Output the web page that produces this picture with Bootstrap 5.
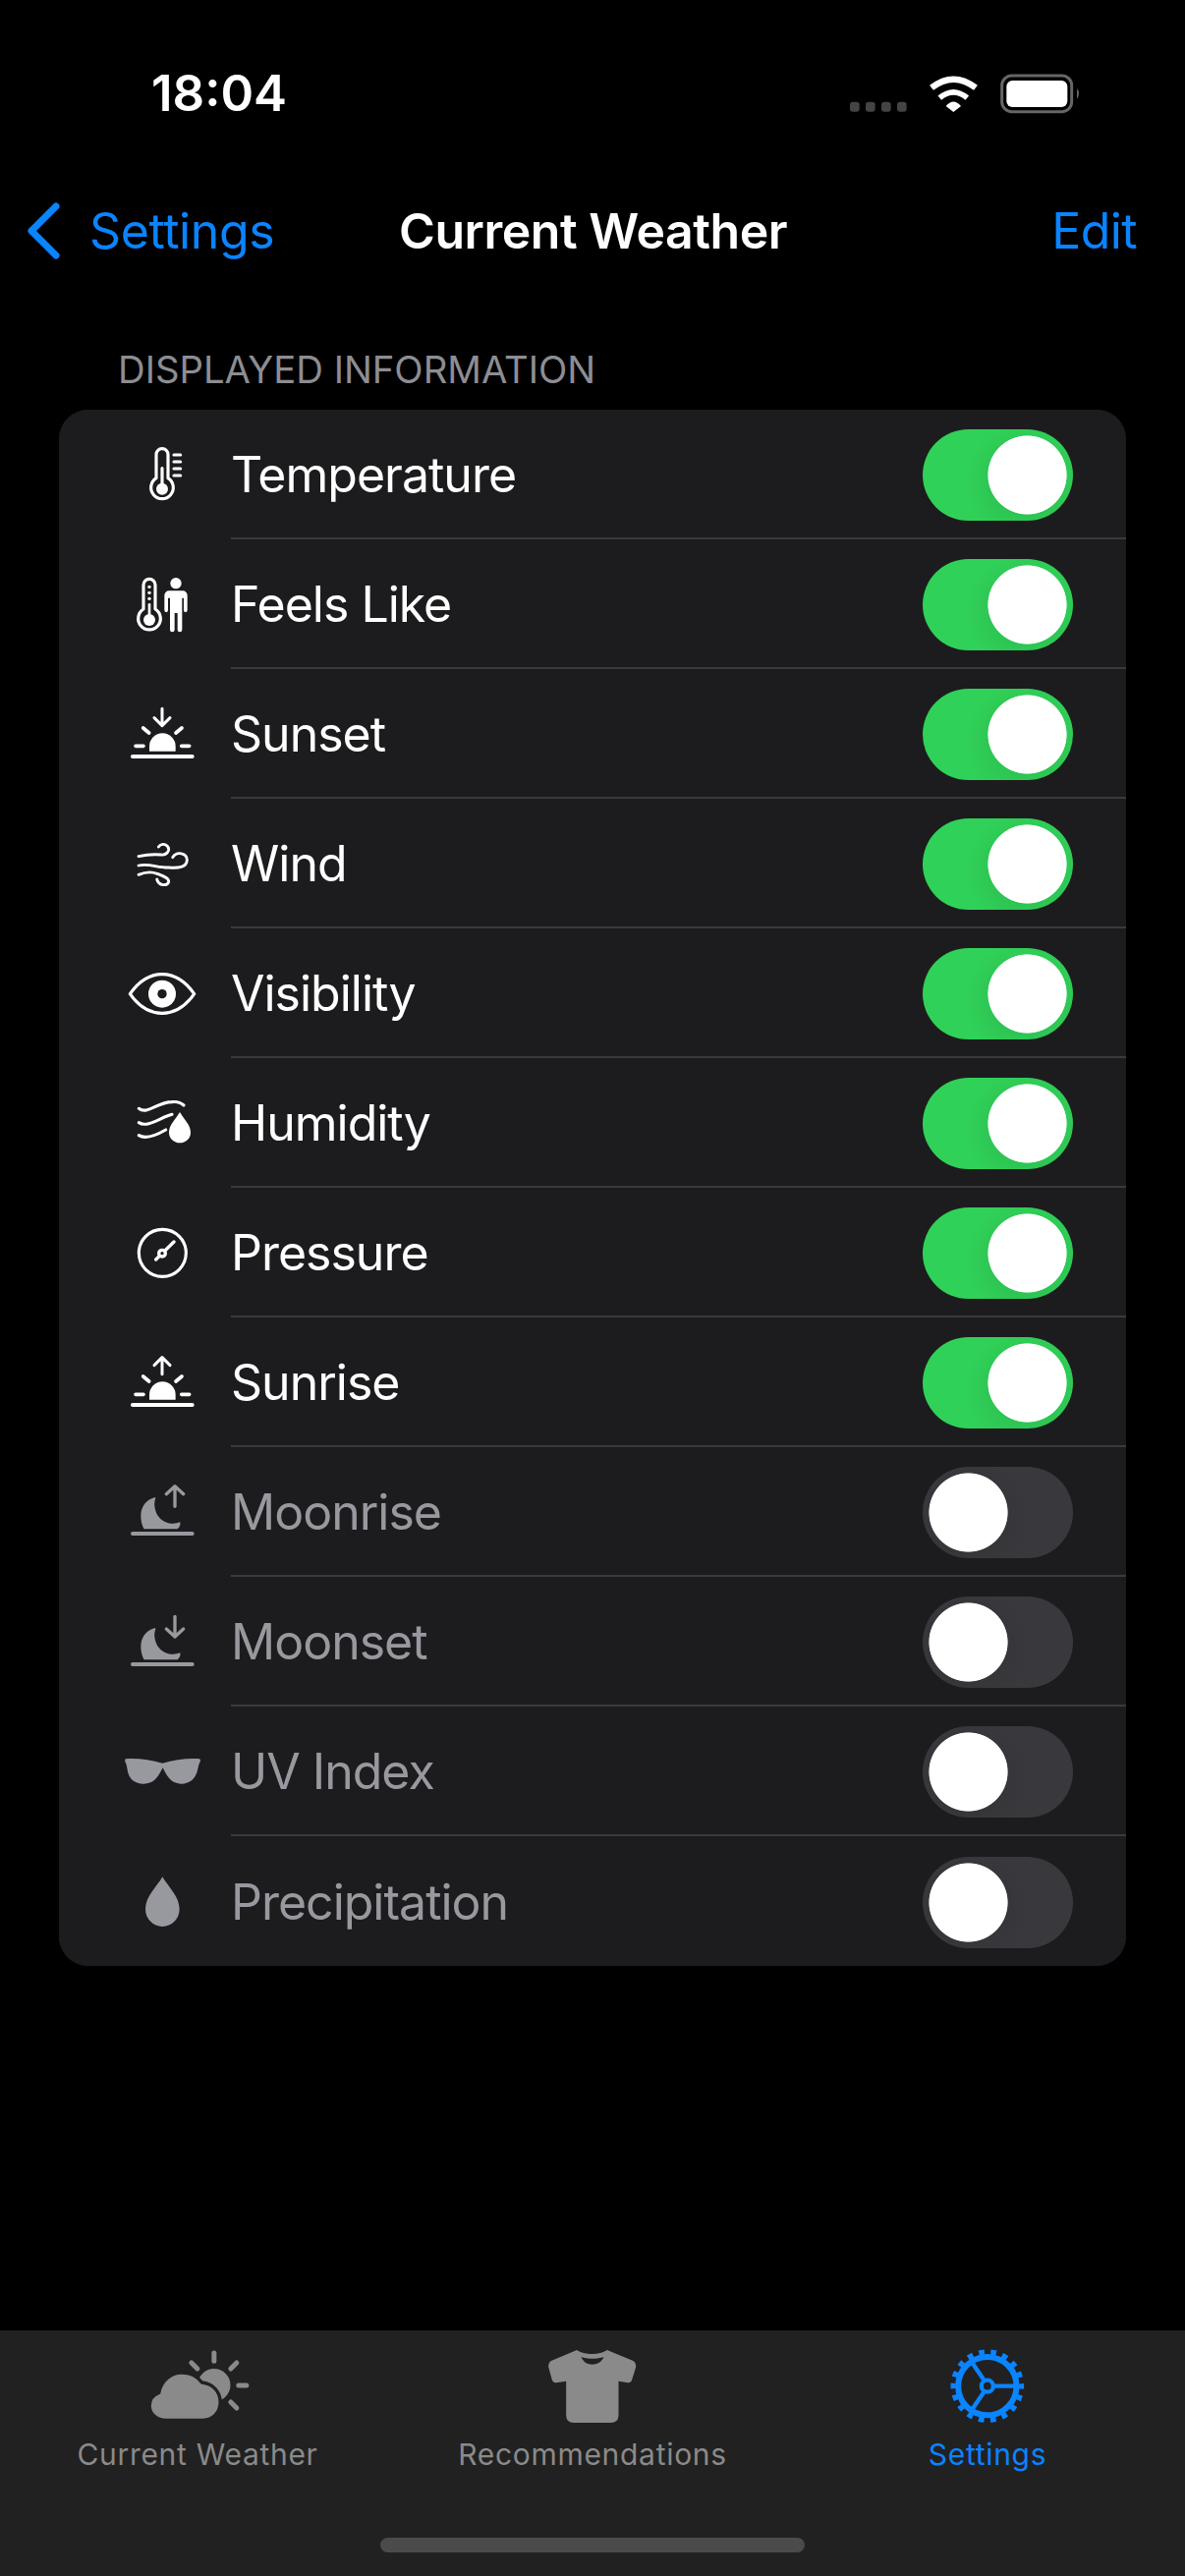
<!DOCTYPE html>
<html lang="en">
<head>
  <meta charset="UTF-8" />
  <meta name="viewport" content="width=device-width, initial-scale=1" />
  <title>Current Weather</title>
  <link href="https://cdn.jsdelivr.net/npm/bootstrap@5.3.2/dist/css/bootstrap.min.css" rel="stylesheet" />
  <style>
    html, body { background: #000; }
    body {
      width: 1206px;
      height: 2622px;
      overflow: hidden;
      font-family: Inter, "Liberation Sans", sans-serif;
      color: #fff;
    }
    .ios-blue { color: #0a84ff; }
    .status-line { height: 50px; margin-top: 70px; padding-left: 154px; padding-right: 101px; }
    .status-time { font-size: 51px; font-weight: 600; line-height: 50px; }
    .nav-line { height: 60px; margin-top: 85px; font-size: 50px; line-height: 60px; }
    .nav-back { width: 406px; flex: none; padding-left: 27px; gap: 30px; letter-spacing: -0.4px; }
    .nav-edit { flex: 1 1 0; padding-right: 49px; letter-spacing: -0.6px; }
    .nav-title { font-weight: 600; letter-spacing: -0.45px; }
    .section-label {
      height: 40px;
      margin: 91px 0 21px 120px;
      font-size: 38.300px;
      line-height: 40px;
      color: #8d8d93;
    }
    .settings-list { margin: 0 60px; border-radius: 30px; background: #1c1c1e; --bs-list-group-bg: #1c1c1e; --bs-list-group-border-width: 0; }
    .settings-item { height: 132px; padding: 0; background: #1c1c1e; color: #fff; }
    .settings-item.is-off { color: #98989f; }
    .item-icon { width: 80px; height: 80px; margin-left: 65px; margin-right: 30px; flex: none; }
    .item-body {
      height: 132px;
      padding-top: 2px;
      padding-right: 54px;
      border-bottom: 2px solid #3a3a3c;
      font-size: 50px;
      letter-spacing: -1px;
    }
    .item-body > span { margin-top: 1px; }
    .settings-item:last-child .item-body { border-bottom: 0; }
    .form-switch.ios-switch { margin: 0; padding: 0; min-height: 0; line-height: 0; }
    .form-switch .ios-toggle {
      width: 153px;
      height: 93px;
      margin: 0;
      border: 0;
      border-radius: 47px;
      background-color: #39393d;
      background-size: auto;
      background-position: 0 0;
      background-image:
        radial-gradient(circle 40.5px at 46.5px 46.5px, #fff 98%, transparent 100%),
        radial-gradient(circle 62px at 48px 52px, rgba(0,0,0,.12), transparent);
    }
    .form-switch .ios-toggle:checked {
      background-color: #30d158;
      background-size: auto;
      background-position: 0 0;
      background-image:
        radial-gradient(circle 40.5px at 106.5px 46.5px, #fff 98%, transparent 100%),
        radial-gradient(circle 62px at 105px 54px, rgba(0,0,0,.13), transparent);
    }
    .tab-strip { height: 250px; background: #212121; color: #8a8a8a; }
    .tab-icon { width: 125px; height: 95px; margin: 8px auto 0; }
    .tab-text { font-size: 30px; line-height: 36px; margin-top: 5px; letter-spacing: 0.7px; }
    .home-bar { width: 432px; height: 15px; margin: 67px auto 0; border-radius: 8px; background: #4b4b4b; }
    .ln { fill: none; stroke: currentColor; stroke-linecap: round; stroke-linejoin: round; }
    .fl { fill: currentColor; }
  </style>
</head>
<body class="d-flex flex-column">
  <!-- Status bar -->
  <div class="status-line d-flex justify-content-between align-items-center">
    <span class="status-time">18:04</span>
    <svg width="245" height="50" viewBox="60 60 735 150">
      <g fill="#444"><rect x="75" y="161" width="29" height="30" rx="9"/><rect x="123" y="161" width="29" height="30" rx="9"/><rect x="171" y="161" width="29" height="30" rx="9"/><rect x="219" y="161" width="29" height="30" rx="9"/></g>
      <g fill="none" stroke="#fff"><path d="M324 118 Q391 66 459 118" stroke-width="19"/><path d="M349 149 Q391 114 433 149" stroke-width="17"/></g>
      <path d="M368 174 Q391 147 414 174 L391 192z" fill="#fff"/>
      <rect x="539" y="81" width="213" height="110" rx="30" fill="none" stroke="#666" stroke-width="9"/>
      <rect x="553" y="96" width="186" height="81" rx="18" fill="#fff"/>
      <path d="M768 119 Q780 136 768 153z" fill="#666"/>
    </svg>
  </div>

  <!-- Nav bar -->
  <div class="nav-line d-flex">
    <div class="nav-back ios-blue d-flex align-items-center">
      <svg width="34" height="58" viewBox="0 0 34 58"><path d="M30 4 L5 29 L30 54" fill="none" stroke="currentColor" stroke-width="7" stroke-linecap="round" stroke-linejoin="round"/></svg>
      <span>Settings</span>
    </div>
    <div class="nav-title">Current Weather</div>
    <div class="nav-edit ios-blue text-end">Edit</div>
  </div>

  <div class="section-label">DISPLAYED INFORMATION</div>

  <ul class="list-group settings-list">
    <li class="list-group-item settings-item d-flex align-items-center">
      <svg class="item-icon" viewBox="45 39 240 240">
        <path class="ln" stroke-width="9.500" d="M147 170V98a18 18 0 0 1 36 0V170a34 34 0 1 1-36 0z"/>
        <circle class="fl" cx="165" cy="203" r="18"/>
        <path class="ln" stroke-width="9.500" d="M165 140V195M201 99H221M201 120H221M201 141H221M201 162H221"/>
      </svg>
      <div class="item-body d-flex flex-grow-1 align-items-center justify-content-between"><span>Temperature</span>
        <div class="form-check form-switch ios-switch"><input class="form-check-input ios-toggle" type="checkbox" role="switch" checked /></div></div>
    </li>
    <li class="list-group-item settings-item d-flex align-items-center">
      <svg class="item-icon" viewBox="45 435 240 240">
        <path class="ln" stroke-width="9.500" d="M108 570V496a18 18 0 0 1 36 0V570a34 34 0 1 1-36 0z"/>
        <circle class="fl" cx="126" cy="603" r="18"/>
        <circle class="fl" cx="126" cy="502" r="5"/><circle class="fl" cx="126" cy="520" r="5"/><circle class="fl" cx="126" cy="538" r="5"/>
        <path class="ln" stroke-width="8" d="M126 556V600"/>
        <circle class="fl" cx="207" cy="491" r="17"/>
        <path class="fl" d="M186 514H228a14 14 0 0 1 14 14V574a5.500 5.500 0 0 1-11 0V536H226V633a7 7 0 0 1-14 0V582H203V633a7 7 0 0 1-14 0V536H183V574a5.500 5.500 0 0 1-11 0V528a14 14 0 0 1 14-14z"/>
      </svg>
      <div class="item-body d-flex flex-grow-1 align-items-center justify-content-between"><span>Feels Like</span>
        <div class="form-check form-switch ios-switch"><input class="form-check-input ios-toggle" type="checkbox" role="switch" checked /></div></div>
    </li>
    <li class="list-group-item settings-item d-flex align-items-center">
      <svg class="item-icon" viewBox="45 831 240 240">
        <path class="ln" stroke-width="9" d="M165 874V925M141 902L165 926L189 902"/>
        <path class="ln" stroke-width="11" d="M107 933L125 948M225 933L207 948M84 988H108M224 988H248"/>
        <path class="fl" d="M126 1004V989a40 40 0 0 1 80 0V1004z"/>
        <path class="ln" stroke-width="12" d="M75 1020H257"/>
      </svg>
      <div class="item-body d-flex flex-grow-1 align-items-center justify-content-between"><span>Sunset</span>
        <div class="form-check form-switch ios-switch"><input class="form-check-input ios-toggle" type="checkbox" role="switch" checked /></div></div>
    </li>
    <li class="list-group-item settings-item d-flex align-items-center">
      <svg class="item-icon" viewBox="45 27 240 240">
        <g class="ln" stroke-width="8.500">
          <path d="M93 125C115 120 140 118 162 120C180 122 190 106 182 95C175 85 160 87 154 96"/>
          <path d="M93 153C125 145 150 160 185 159C212 161 241 160 241 136C241 115 210 108 197 128"/>
          <path d="M93 181C115 172 135 172 150 178C165 184 187 190 185 203C180 216 155 216 149 195"/>
        </g>
      </svg>
      <div class="item-body d-flex flex-grow-1 align-items-center justify-content-between"><span>Wind</span>
        <div class="form-check form-switch ios-switch"><input class="form-check-input ios-toggle" type="checkbox" role="switch" checked /></div></div>
    </li>
    <li class="list-group-item settings-item d-flex align-items-center">
      <svg class="item-icon" viewBox="45 423 240 240">
        <path class="ln" stroke-width="9.500" d="M67 545C95 505 130 485 165 485C200 485 235 505 263 545C235 585 200 604 165 604C130 604 95 585 67 545z"/>
        <circle class="fl" cx="165" cy="545" r="42"/>
        <circle cx="165" cy="545" r="14" fill="#1c1c1e"/>
      </svg>
      <div class="item-body d-flex flex-grow-1 align-items-center justify-content-between"><span>Visibility</span>
        <div class="form-check form-switch ios-switch"><input class="form-check-input ios-toggle" type="checkbox" role="switch" checked /></div></div>
    </li>
    <li class="list-group-item settings-item d-flex align-items-center">
      <svg class="item-icon" viewBox="45 819 240 240">
        <g class="ln" stroke-width="9.500">
          <path d="M94 895C120 915 150 875 195 875C210 873 222 877 231 885"/>
          <path d="M94 938C120 955 160 922 195 913"/>
          <path d="M94 977C115 990 150 975 176 960"/>
        </g>
        <path class="fl" d="M219 906C205 930 186 945 186 968a33 32 0 0 0 66 0C252 945 233 930 219 906z"/>
      </svg>
      <div class="item-body d-flex flex-grow-1 align-items-center justify-content-between"><span>Humidity</span>
        <div class="form-check form-switch ios-switch"><input class="form-check-input ios-toggle" type="checkbox" role="switch" checked /></div></div>
    </li>
    <li class="list-group-item settings-item d-flex align-items-center">
      <svg class="item-icon" viewBox="45 15 240 240">
        <circle class="ln" cx="166" cy="136" r="72" stroke-width="9.500"/>
        <path class="ln" stroke-width="10" d="M146 156L201 102"/>
        <circle class="fl" cx="165" cy="137" r="15"/>
        <circle cx="165" cy="137" r="5" fill="#1c1c1e"/>
      </svg>
      <div class="item-body d-flex flex-grow-1 align-items-center justify-content-between"><span>Pressure</span>
        <div class="form-check form-switch ios-switch"><input class="form-check-input ios-toggle" type="checkbox" role="switch" checked /></div></div>
    </li>
    <li class="list-group-item settings-item d-flex align-items-center">
      <svg class="item-icon" viewBox="45 411 240 240">
        <path class="ln" stroke-width="9" d="M165 506V455M141 479L165 455L189 479"/>
        <path class="ln" stroke-width="11" d="M107 513L125 528M225 513L207 528M84 568H108M224 568H248"/>
        <path class="fl" d="M126 584V569a40 40 0 0 1 80 0V584z"/>
        <path class="ln" stroke-width="12" d="M75 600H257"/>
      </svg>
      <div class="item-body d-flex flex-grow-1 align-items-center justify-content-between"><span>Sunrise</span>
        <div class="form-check form-switch ios-switch"><input class="form-check-input ios-toggle" type="checkbox" role="switch" checked /></div></div>
    </li>
    <li class="list-group-item settings-item is-off d-flex align-items-center">
      <svg class="item-icon" viewBox="45 807 240 240">
        <path class="ln" stroke-width="10" d="M204 910V850M178 872L204 848L230 872"/>
        <path class="fl" d="M143 882C115 890 100 912 100 938C100 955 104 970 110 979H212C218 974 222 966 220 958C195 968 165 960 150 935C140 915 140 898 145 885z"/>
        <path class="ln" stroke-width="12" d="M75 993H257"/>
      </svg>
      <div class="item-body d-flex flex-grow-1 align-items-center justify-content-between"><span>Moonrise</span>
        <div class="form-check form-switch ios-switch"><input class="form-check-input ios-toggle" type="checkbox" role="switch" /></div></div>
    </li>
    <li class="list-group-item settings-item is-off d-flex align-items-center">
      <svg class="item-icon" viewBox="45 3 240 240">
        <path class="ln" stroke-width="10" d="M204 46V108M178 84L204 108L230 84"/>
        <path class="fl" d="M143 81C115 89 100 111 100 137C100 154 104 169 110 178H212C218 173 222 165 220 157C195 167 165 159 150 134C140 114 140 97 145 84z"/>
        <path class="ln" stroke-width="12" d="M75 192H257"/>
      </svg>
      <div class="item-body d-flex flex-grow-1 align-items-center justify-content-between"><span>Moonset</span>
        <div class="form-check form-switch ios-switch"><input class="form-check-input ios-toggle" type="checkbox" role="switch" /></div></div>
    </li>
    <li class="list-group-item settings-item is-off d-flex align-items-center">
      <svg class="item-icon" viewBox="45 399 240 240">
        <path class="fl" d="M54 481C90 478 130 485 166 494C202 485 242 478 279 481Q284 483 281 490C276 497 275 510 272 520C265 545 245 558 222 557C190 556 178 530 167 508C155 530 145 556 110 557C85 558 65 545 60 520C58 510 57 497 52 490Q50 483 54 481z"/>
      </svg>
      <div class="item-body d-flex flex-grow-1 align-items-center justify-content-between"><span>UV Index</span>
        <div class="form-check form-switch ios-switch"><input class="form-check-input ios-toggle" type="checkbox" role="switch" /></div></div>
    </li>
    <li class="list-group-item settings-item is-off d-flex align-items-center">
      <svg class="item-icon" viewBox="45 795 240 240">
        <path class="fl" d="M166 841C150 870 114 900 114 940C114 970 138 993 166 993C194 993 218 970 218 940C218 900 182 870 166 841z"/>
      </svg>
      <div class="item-body d-flex flex-grow-1 align-items-center justify-content-between"><span>Precipitation</span>
        <div class="form-check form-switch ios-switch"><input class="form-check-input ios-toggle" type="checkbox" role="switch" /></div></div>
    </li>
  </ul>

  <!-- Tab bar -->
  <div class="tab-strip mt-auto">
    <div class="row g-0 text-center">
      <div class="col-4">
        <svg class="tab-icon d-block" viewBox="-4.500 0 375 285">
          <path class="ln" stroke-width="15" d="M232 45V70M163 75L181 93M301 75L283 93M307 144H331M283 195L301 213"/>
          <circle class="fl" cx="232" cy="143" r="50"/>
          <path class="fl" stroke="#212121" stroke-width="10" d="M85 250C56 250 35 230 35 207C35 187 47 172 64 166C70 131 100 105 133 105C160 105 182 117 195 135C228 138 251 163 251 195C251 227 228 250 198 250z"/>
        </svg>
        <div class="tab-text">Current Weather</div>
      </div>
      <div class="col-4">
        <svg class="tab-icon d-block" viewBox="-13.500 0 375 285">
          <path class="fl" d="M125 36C135 44 155 48 172 48C190 48 205 44 217 36L295 68Q306 73 305 88L293 127Q290 137 280 136L252 131V235Q252 258 228 258H115Q92 258 92 235V131L62 136Q52 137 49 127L38 88Q37 73 48 68z"/>
          <path d="M138 57C155 64 190 64 207 57C200 74 185 80 172 80C158 80 145 74 138 57z" fill="#212121"/>
        </svg>
        <div class="tab-text">Recommendations</div>
      </div>
      <div class="col-4 ios-blue">
        <svg class="tab-icon d-block" viewBox="-7.500 0 375 285">
          <circle cx="178" cy="146" r="89" fill="none" stroke="currentColor" stroke-width="18"/>
          <circle cx="178" cy="146" r="104" fill="none" stroke="currentColor" stroke-width="16" stroke-dasharray="17 19.300" stroke-dashoffset="8.500"/>
          <circle cx="178" cy="146" r="18" fill="none" stroke="currentColor" stroke-width="13"/>
          <path fill="none" stroke="currentColor" stroke-width="13" d="M200 146H262M167 127L132 75M167 165L132 217"/>
        </svg>
        <div class="tab-text">Settings</div>
      </div>
    </div>
    <div class="home-bar"></div>
  </div>

  <script src="https://cdn.jsdelivr.net/npm/bootstrap@5.3.2/dist/js/bootstrap.bundle.min.js"></script>
</body>
</html>
